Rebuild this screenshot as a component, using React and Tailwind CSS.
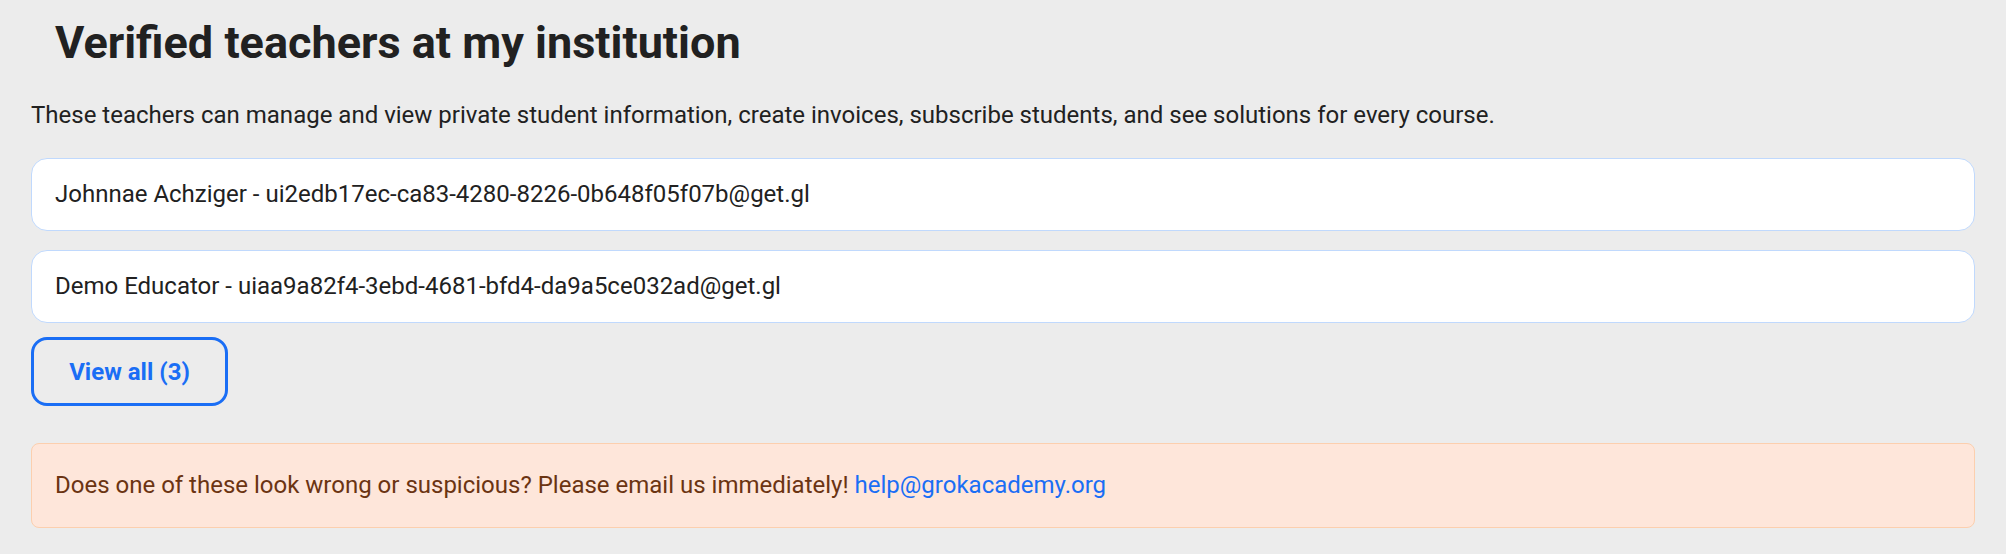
export default function App() {
  const teachers = [
    'Johnnae Achziger - ui2edb17ec-ca83-4280-8226-0b648f05f07b@get.gl',
    'Demo Educator - uiaa9a82f4-3ebd-4681-bfd4-da9a5ce032ad@get.gl',
  ]

  return (
    <div className="min-h-[554px] bg-[#ececec] px-[31px] pt-[17px] font-['Roboto',sans-serif] text-[#212121]">
      <h1 className="ml-6 text-[45px] font-bold leading-[52px]">Verified teachers at my institution</h1>

      <p className="mt-[30px] text-[24px] leading-[33px]">
        These teachers can manage and view private student information, create invoices, subscribe students, and see
        solutions for every course.
      </p>

      {/* Teachers */}
      <div className="mt-[26px] flex flex-col gap-[19px]">
        {teachers.map((t) => (
          <div key={t} className="rounded-2xl border border-[#c0d9fd] bg-white px-[23px] py-[19px] text-[24px] leading-[33px]">
            {t}
          </div>
        ))}
      </div>

      <button className="mt-[14px] h-[69px] w-[197px] rounded-2xl border-[3px] border-[#1a6ef5] text-[24px] font-bold text-[#1a6ef5]">
        View all (3)
      </button>

      {/* Alert */}
      <div className="mt-[37px] rounded-lg border border-[#fccfae] bg-[#fee6da] px-[23px] py-[25px] text-[24px] leading-[33px] text-[#6b3412]">
        Does one of these look wrong or suspicious? Please email us immediately!{' '}
        <a href="#" className="text-[#1a6ef5]">help@grokacademy.org</a>
      </div>
    </div>
  )
}
